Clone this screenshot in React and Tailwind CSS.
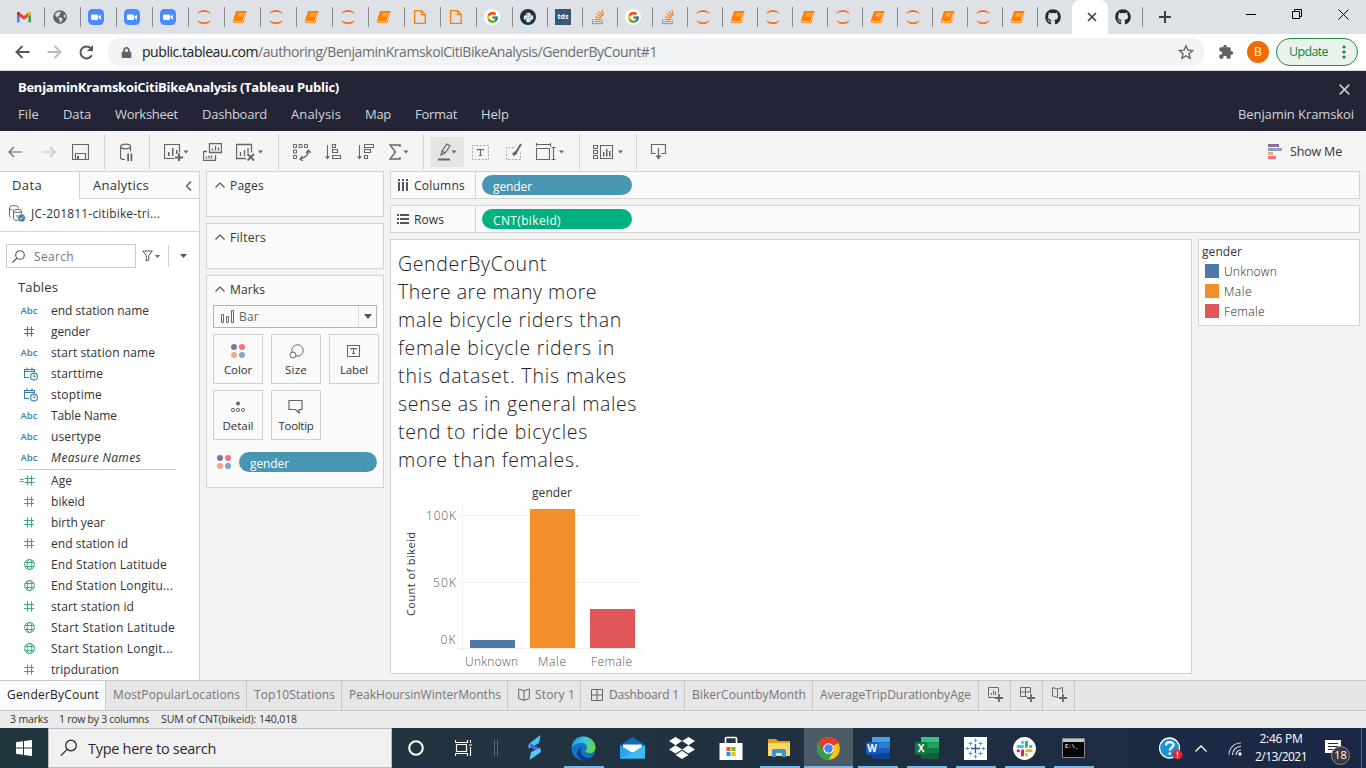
import React, { useLayoutEffect, useRef } from "react";
import { FaGithub, FaDropbox, FaPython, FaLock, FaGlobeAmericas } from "react-icons/fa";
import { FcGoogle } from "react-icons/fc";

/* Single-line label whose tracking is tuned so that the run has the given length. */
function Fit({ w, className = "", children }) {
  const ref = useRef(null);
  useLayoutEffect(() => {
    const el = ref.current;
    el.style.letterSpacing = "0px";
    const n = el.textContent.length;
    const natural = el.getBoundingClientRect().width;
    el.style.letterSpacing = (w - natural) / n + "px";
  }, [w, children]);
  return <span ref={ref} className={"inline-block whitespace-nowrap " + className}>{children}</span>;
}

const UI = "font-['Open_Sans','Noto_Sans',sans-serif]";

/* ---------- browser tabs ---------- */
const Gmail = () => (
  <svg width="16" height="16" viewBox="0 0 16 16">
    <path d="M1 3.600h2.600v10H2a1 1 0 0 1-1-1z" fill="#4285f4" />
    <path d="M12.400 3.600H15v9a1 1 0 0 1-1 1h-1.600z" fill="#34a853" />
    <path d="M3.600 3.600L8 7l4.400-3.400v3.800L8 10.800 3.600 7.400z" fill="#ea4335" />
    <path d="M1 4.200c0-1.600 1.600-2 2.600-1v4.200L1 5.600z" fill="#c5221f" />
    <path d="M15 4.200c0-1.600-1.600-2-2.600-1v4.200L15 5.600z" fill="#fbbc04" />
  </svg>
);
const Globe = () => <span className="flex size-4 items-center justify-center"><FaGlobeAmericas size={14} color="#5f6368" /></span>;
const Zoom = () => (
  <svg width="16" height="16" viewBox="0 0 16 16">
    <rect width="16" height="16" rx="4.500" fill="#4a8cff" />
    <rect x="3" y="5.500" width="7" height="5.500" rx="1" fill="#fff" />
    <path d="M10.500 7.500L13 5.700v5.100l-2.500-1.800z" fill="#fff" />
  </svg>
);
const Jupyter = () => (
  <svg width="16" height="16" viewBox="0 0 16 16" fill="#f37626">
    <path d="M1 5.200C2.500 2.200 5 1 8 1s5.500 1.200 7 4.200C13 3.500 10.500 3 8 3s-5 .5-7 2.200z" />
    <path d="M1 11c1.500 3 4 4.200 7 4.200s5.500-1.200 7-4.200c-2 1.700-4.500 2.200-7 2.200S3 12.700 1 11z" />
  </svg>
);
const Book = () => (
  <svg width="16" height="16" viewBox="0 0 16 16">
    <path d="M5.400 2h7.800c1 0 1.500.7 1.200 1.600L12 12.400c-.3 1-1 1.600-2 1.600H2.800c-1.500 0-2.300-1.300-1.800-2.600L3.600 3.400C3.900 2.500 4.500 2 5.400 2z" fill="#ff7f00" />
    <path d="M6.400 4.800h5M5.800 6.800h5" stroke="#fde3c8" strokeWidth=".9" />
    <path d="M2.400 11.300c-.6 1.300 0 1.500.7 1.500h6.700c.8 0 1-.3 1.300-1.200L13.500 4" fill="none" stroke="#fde3c8" strokeWidth=".9" />
  </svg>
);
const File = () => (
  <svg width="16" height="16" viewBox="0 0 16 16" fill="none" stroke="#ff7f00" strokeWidth="1.300">
    <path d="M2.600 1.700h7l3.700 3.800v8.800H2.600z" /><path d="M9.500 1.700v4h4" />
  </svg>
);
const Google = () => <span className="flex size-4 items-center justify-center rounded-full bg-white"><FcGoogle size={13} /></span>;
const Python = () => <span className="flex size-4 items-center justify-center rounded-full bg-[#1c3247]"><FaPython size={11} color="#e3eaf2" /></span>;
const Tds = () => <span className={"flex size-4 items-center justify-center bg-[#355876] pb-px text-[7px] leading-none font-bold text-white " + UI}>tds</span>;
const Stack = () => (
  <svg width="16" height="16" viewBox="0 0 16 16" fill="none" strokeWidth="1.200">
    <path d="M2.600 10.200v4.500h9.600v-4.500" stroke="#9a9b9e" />
    <path d="M4.300 12.500h6.200M4.500 10.200l6.100.8M5.200 7.500l5.700 2.100M6.700 4.800l4.900 3.500M9 2.500l3.500 4.700M12 1l1.400 5.500" stroke="#f48024" />
  </svg>
);
const Github = () => <FaGithub size={16} color="#24292e" />;

const wideTabs = [Gmail, Globe, Zoom, Zoom, Zoom, Jupyter, Book, Jupyter, Book, Jupyter, Book, File, File, Google];
const narrowTabs = [Python, Tds, Stack, Google, Stack, Jupyter, Book, Jupyter, Book, Jupyter, Book, Jupyter, Book, Jupyter, Book, Github];

function TabStrip() {
  return (
    <div className="flex h-[34px] bg-[#dee1e6] pl-2">
      {wideTabs.map((Icon, i) => (
        <div key={i} className="flex w-9 items-center">
          <div className={"h-5 w-px " + (i ? "bg-[#86898d]" : "")} />
          <div className="ml-[7px]"><Icon /></div>
        </div>
      ))}
      {narrowTabs.map((Icon, i) => (
        <div key={i} className="flex w-[35px] items-center">
          <div className="h-5 w-px bg-[#86898d]" />
          <div className="ml-[7px]"><Icon /></div>
        </div>
      ))}
      <div className="flex w-9 items-center justify-center rounded-t-lg bg-white pl-1">
        <svg width="10" height="10" viewBox="0 0 10 10" stroke="#3c4043" strokeWidth="1.700"><path d="M1 1l8 8M9 1l-8 8" /></svg>
      </div>
      <div className="flex w-[34px] items-center pl-[7px]"><Github /></div>
      <div className="flex items-center">
        <div className="h-5 w-px bg-[#86898d]" />
        <svg className="ml-4" width="12" height="12" viewBox="0 0 12 12" stroke="#3c4043" strokeWidth="2"><path d="M6 0v12M0 6h12" /></svg>
      </div>
      <div className="ml-auto flex h-7 items-center pr-[17px]">
        <svg className="mr-9" width="10" height="10" viewBox="0 0 10 10"><path d="M0 5.500h10" stroke="#000" /></svg>
        <svg className="mr-9" width="10" height="10" viewBox="0 0 10 10" fill="none" stroke="#000"><path d="M.5 2.500h7v7h-7zM2.500 2.500v-2h7v7h-2" /></svg>
        <svg width="11" height="11" viewBox="0 0 11 11" stroke="#000"><path d="M.5.5l10 10M10.500.5l-10 10" /></svg>
      </div>
    </div>
  );
}

function AddressBar() {
  return (
    <div className={"flex h-[37px] items-center border-b border-[#d9dadc] bg-white " + UI}>
      <svg className="ml-[15px]" width="15" height="14" viewBox="0 0 15 14" fill="none" stroke="#54575b" strokeWidth="1.900"><path d="M14.500 7H1.500M7.500 1L1.500 7l6 6" /></svg>
      <svg className="ml-[17px]" width="15" height="14" viewBox="0 0 15 14" fill="none" stroke="#babcbe" strokeWidth="1.900"><path d="M.5 7h13M7.500 1l6 6-6 6" /></svg>
      <svg className="ml-[17px]" width="15" height="15" viewBox="0 0 15 15"><path d="M12.800 10.200A6 6 0 1 1 12 3.400" fill="none" stroke="#54575b" strokeWidth="2" /><path d="M14 0v6H8z" fill="#54575b" /></svg>
      <div className="ml-[14px] flex h-7 w-[1096px] items-center rounded-full bg-[#f1f3f4]">
        <FaLock className="ml-[13px]" size={11} color="#5f6368" />
        <div className="ml-[10px] flex text-[14px] leading-5">
          <Fit w={116} className="text-[#202124]">public.tableau.com</Fit>
          <Fit w={399} className="text-[#6b6e72]">/authoring/BenjaminKramskoiCitiBikeAnalysis/GenderByCount#1</Fit>
        </div>
        <svg className="mr-[10px] ml-auto" width="16" height="16" viewBox="0 0 24 24" fill="none" stroke="#5f6368" strokeWidth="2"><path d="M12 2.800l2.800 6.500 7 .6-5.300 4.600 1.600 6.900-6.100-3.700-6.100 3.700 1.600-6.900-5.300-4.600 7-.6z" /></svg>
      </div>
      <svg className="ml-[14px]" width="16" height="16" viewBox="0 0 24 24" fill="#5f6368"><path d="M20.500 11H19V7a2 2 0 0 0-2-2h-4V3.500a2.500 2.500 0 0 0-5 0V5H4a2 2 0 0 0-2 2v3.800h1.500a2.700 2.700 0 0 1 0 5.400H2V20a2 2 0 0 0 2 2h3.800v-1.500a2.700 2.700 0 0 1 5.400 0V22H17a2 2 0 0 0 2-2v-4h1.500a2.500 2.500 0 0 0 0-5z" /></svg>
      <div className="ml-[13px] flex size-[22px] items-center justify-center rounded-full bg-[#ef6c00] text-[12px] text-white">B</div>
      <div className="ml-[7px] flex h-7 w-[82px] items-center rounded-full border border-[#1e8e3e] bg-[#e9f2ec] text-[12.500px] text-[#188038]">
        <Fit w={39} className="ml-3">Update</Fit>
        <svg className="ml-[14px]" width="4" height="14" fill="#188038"><circle cx="2" cy="2" r="1.600" /><circle cx="2" cy="7" r="1.600" /><circle cx="2" cy="12" r="1.600" /></svg>
      </div>
    </div>
  );
}

/* ---------- Tableau header ---------- */
const menus = [["File", 21], ["Data", 28], ["Worksheet", 63], ["Dashboard", 65], ["Analysis", 50], ["Map", 26], ["Format", 42], ["Help", 28]];

function Header() {
  return (
    <div className="flex h-[60px] justify-between bg-[#232536] pr-3 pl-[18px]">
      <div>
        <div className="flex h-8 items-center pt-px text-[13px] font-bold text-white"><Fit w={321}>BenjaminKramskoiCitiBikeAnalysis (Tableau Public)</Fit></div>
        <div className="flex h-[22px] items-center gap-6 pt-0.5 text-[13px] text-[#d4d5da]">
          {menus.map(([m, w]) => <Fit key={m} w={w}>{m}</Fit>)}
        </div>
      </div>
      <div className="flex flex-col items-end">
        <div className="flex h-8 items-center pt-1 pr-1">
          <svg width="11" height="11" viewBox="0 0 11 11" stroke="#c8c8cc" strokeWidth="1.700"><path d="M.7.7l9.600 9.600M10.300.7L.7 10.300" /></svg>
        </div>
        <div className="flex h-[22px] items-center pt-0.5 text-[13px] text-[#d4d5da]"><Fit w={116}>Benjamin Kramskoi</Fit></div>
      </div>
    </div>
  );
}

const Sep = ({ className = "" }) => <div className={"h-9 w-px bg-[#d4d4d4] " + className} />;
const Ico = ({ w, h = 18, className = "", children }) => (
  <svg width={w} height={h} viewBox={`0 0 ${w} ${h}`} fill="none" stroke="#666" className={"shrink-0 " + className}>{children}</svg>
);
const Caret = ({ x, y = 7.5 }) => <path d={`M${x} ${y}h5l-2.500 3z`} fill="#666" stroke="none" />;

function Toolbar() {
  return (
    <div className="flex h-10 items-center bg-[#f5f5f5] pt-px">
      <Ico w={14} className="ml-2"><path d="M14 9H1M6 4L1 9l5 5" strokeWidth="1.200" /></Ico>
      <Ico w={14} className="ml-5"><path d="M0 9h13M8 4l5 5-5 5" stroke="#c2c2c2" strokeWidth="1.200" /></Ico>
      <Ico w={17} className="ml-4"><path d="M.5 1.500h16v15H.5zM3.500 16.500v-6h10v6" strokeWidth="1.200" /><path d="M5 13h2v3H5z" fill="#666" stroke="none" /></Ico>
      <Sep className="ml-[15px]" />
      <Ico w={14} className="ml-[15px]"><ellipse cx="5.500" cy="3.500" rx="5" ry="2.300" strokeWidth="1.200" /><path d="M.5 3.500v11c0 1 2 2 4.500 2M10.500 3.500v5" strokeWidth="1.200" /><path d="M7.200 10.500h1.800v7.500H7.200zM10.500 10.500h1.800v7.500h-1.800z" fill="#666" stroke="none" /></Ico>
      <Sep className="ml-[15px]" />
      <Ico w={26} className="ml-[14px]"><path d="M10.500 15.500H.5v-14h15v8" strokeWidth="1.200" /><path d="M4 9h1.500v4H4zM8 5h1.500v8H8zM12 7h1.500v4H12z" fill="#666" stroke="none" /><path d="M15 10.500v8M11 14.500h8" strokeWidth="2" /><Caret x={19.500} /></Ico>
      <Ico w={19} className="ml-[13px]"><path d="M6.500.5h12v9h-12zM4 8.500H.5v9h12V12M9.500 7.500v-2M12.500 7.500V3M15.500 7.500v-3M3.500 15.500v-2M6 15.500v-3M8.500 15.500v-3" strokeWidth="1.300" /></Ico>
      <Ico w={28} className="ml-[14px]"><path d="M10 15.500H.5v-14h15v8M4.500 13V9M8.500 13V7M12 10V5" strokeWidth="1.300" /><path d="M11.500 11l6.500 6.500M18 11l-6.500 6.500" strokeWidth="1.900" /><Caret x={22} /></Ico>
      <Sep className="ml-[14px]" />
      <Ico w={18} className="ml-[14px]"><path d="M.5 1.500h3v3h-3zM6 1.500h3v3H6zM11.500 1.500h3v3h-3zM.5 7h3v3h-3zM.5 12.500h3v3h-3z" /><path d="M15.500 7.500c0 4-3 7-8 8.500M13 10l2.500-3L18 10M9.500 13L7 16l3 2" strokeWidth="1.300" /></Ico>
      <Ico w={17} className="ml-[14px]"><path d="M2.500 2v13M.5 13l2 2.500 2-2.500M7.500 1.500h3v3h-3zM7.500 6.500h5v3h-5zM7.500 12.500h8v3h-8z" strokeWidth="1.100" /></Ico>
      <Ico w={17} className="ml-[15px]"><path d="M2.500 2v13M.5 13l2 2.500 2-2.500M7.500 1.500h9v3h-9zM7.500 6.500h6v3h-6zM7.500 12.500h3v3h-3z" strokeWidth="1.100" /></Ico>
      <Ico w={20} className="ml-[15px]"><path d="M11 4V2H1l5.500 7L1 16h10v-2" strokeWidth="1.400" /><Caret x={14.500} /></Ico>
      <Sep className="ml-[14px]" />
      <div className="ml-[7px] flex h-[30px] w-[33px] items-center bg-[#e5e5e5] pl-1.5">
        <Ico w={22}><path d="M4 12l1-4 5-7 3 2-5 7zM4 12l4-2M5 8l3 2" strokeWidth="1.200" /><path d="M1 16.500h12" strokeWidth="2" /><Caret x={14.500} /></Ico>
      </div>
      <Ico w={17} className="ml-2"><rect x=".5" y="2.500" width="16" height="14" strokeDasharray="2 1.500" stroke="#aaa" /><path d="M5.500 7.500V6.500h6v1M8.500 6.500v6M7 12.500h3" strokeWidth="1.200" /></Ico>
      <Ico w={17} className="ml-[17px]"><path d="M8 4.500H.5v12h14V8" strokeDasharray="2 1.500" stroke="#aaa" /><path d="M15 1l-5 8.500" strokeWidth="2" /><path d="M10.500 9L7 12" strokeWidth="3" /></Ico>
      <Ico w={29} className="ml-[13px]"><path d="M.5 5.500h13v11H.5zM.5 0v3.500M14.500 0v3.500M.5 1.500h14M15.500 4.500h4M15.500 16.500h4M17.500 4.500v12" strokeWidth="1.100" /><Caret x={23} /></Ico>
      <Sep className="ml-[14px]" />
      <Ico w={31} className="ml-[13px]"><path d="M.5 2.500h4v3h-4zM.5 7.500h4v3h-4zM.5 12.500h4v3h-4zM7.500 2.500h12v13h-12z" strokeWidth="1.100" /><path d="M10 9h1.500v4.500H10zM13 6h1.500v7.500H13zM16 8h1.500v5.500H16z" fill="#666" stroke="none" /><Caret x={25} /></Ico>
      <Sep className="ml-[12px]" />
      <Ico w={17} className="ml-[13px]"><path d="M5.500 10.500h-4v-9h14v9h-4M8.500 5v8" strokeWidth="1.200" /><path d="M5.500 12.500h6l-3 4z" fill="#666" stroke="none" /></Ico>
      <svg className="ml-auto" width="15" height="15" viewBox="0 0 15 15"><path d="M1 0h11v3H1z" fill="#8b6f98" /><path d="M1 4h14v3H1z" fill="#7fa4cd" /><path d="M1 8h5v3H1z" fill="#f4a77c" /><path d="M1 12h8v3H1z" fill="#f97083" /></svg>
      <Fit w={52} className="mt-0.5 mr-6 ml-2 text-[12.500px] text-[#333]">Show Me</Fit>
    </div>
  );
}

/* ---------- data pane ---------- */
const Abc = () => <Fit w={17} className="text-[9.500px] font-semibold text-[#3b82a0]">Abc</Fit>;
const Hash = ({ color = "#3b82a0" }) => (
  <svg width="11" height="11" viewBox="0 0 11 11" stroke={color} strokeWidth="1.200"><path d="M0 3.500h10M0 7.500h10M3.500.5v10M7.500.5v10" /></svg>
);
const CalcHash = () => (
  <svg className="-ml-1" width="15" height="11" viewBox="0 0 15 11" stroke="#41a88a" strokeWidth="1.200"><path d="M4.500 3.500h10M4.500 7.500h10M7.500.5v10M11.500.5v10M0 4.500h3.500M0 6.500h3.500" /></svg>
);
const Cal = () => (
  <svg className="ml-1" width="15" height="14" viewBox="0 0 15 14" fill="none" stroke="#3b82a0" strokeWidth="1.100"><path d="M5 10.500H.5v-8h10V5M.5 4.500h10M3 .5v3M8 .5v3" /><circle cx="10" cy="9.500" r="3.400" fill="#fff" /><path d="M10 7.500v2h1.500" /></svg>
);
const Geo = () => (
  <svg width="11" height="11" viewBox="0 0 11 11" fill="none" stroke="#41a88a" strokeWidth="1"><circle cx="5.500" cy="5.500" r="5" /><ellipse cx="5.500" cy="5.500" rx="2.300" ry="5" /><path d="M1 3.500h9M1 7.500h9" /></svg>
);
const GHash = () => <Hash color="#41a88a" />;
const dims = [[Abc, "end station name", 98], [Hash, "gender", 39], [Abc, "start station name", 104], [Cal, "starttime", 52], [Cal, "stoptime", 51], [Abc, "Table Name", 66], [Abc, "usertype", 50], [Abc, "Measure Names", 90]];
const measures = [[CalcHash, "Age", 21], [GHash, "bikeid", 34], [GHash, "birth year", 54], [GHash, "end station id", 77], [Geo, "End Station Latitude", 116], [Geo, "End Station Longitu...", 122], [GHash, "start station id", 83], [Geo, "Start Station Latitude", 124], [Geo, "Start Station Longit...", 122], [GHash, "tripduration", 68]];

const Field = ({ row: [Icon, name, w] }) => (
  <div className="flex h-[21px] items-center text-[12px] leading-[17px] text-[#333]">
    <div className="flex w-[51px] justify-center pr-px pl-[8px]"><Icon /></div>
    <Fit w={w} className={name === "Measure Names" ? "italic" : ""}>{name}</Fit>
  </div>
);

function DataPane() {
  return (
    <div className="flex w-[200px] shrink-0 flex-col border-t border-r border-[#d4d4d4] bg-white">
      <div className="flex h-[27px] text-[13px] text-[#333]">
        <div className="flex w-[79px] items-center pl-3"><Fit w={30}>Data</Fit></div>
        <div className="flex flex-1 items-center border-b border-l border-[#d4d4d4] bg-[#fafafa] pl-[13px]">
          <Fit w={56} className="mt-0.5">Analytics</Fit>
          <svg className="mt-px ml-auto mr-[7px]" width="7" height="10" viewBox="0 0 7 10" fill="none" stroke="#555" strokeWidth="1.300"><path d="M6 .5L1.500 5 6 9.500" /></svg>
        </div>
      </div>
      <div className="flex h-[33px] items-center border-b border-[#d4d4d4] pb-1 pl-[9px] text-[12px] text-[#333]">
        <svg width="17" height="17" viewBox="0 0 17 17" fill="none" stroke="#666"><path d="M2 12.500c-1-.5-1.500-1-1.500-2v-8c0-2.500 9-2.500 9 0v1M.5 3c0 1.500 1.500 1.700 3 1.800" /><path d="M4.500 6v7.500c0 1 2 2 4 2M4.500 6c0-2 8-2 8 0s-8 2-8 0M12.500 6v3M7 11h3" /><circle cx="12.500" cy="13" r="4" fill="#3b82a0" stroke="#fff" strokeWidth=".6" /><path d="M10.700 13l1.300 1.300 2.200-2.500" stroke="#fff" /></svg>
        <Fit w={129} className="mt-0.5 ml-[5px]">JC-201811-citibike-tri...</Fit>
      </div>
      <div className="mt-3 flex h-6 items-center">
        <div className="ml-1.5 flex h-6 w-[130px] items-center border border-[#ccc] pl-[5px] text-[12px] text-[#767676]">
          <svg width="13" height="13" viewBox="0 0 13 13" fill="none" stroke="#555" strokeWidth="1.100"><circle cx="8" cy="5" r="4.300" /><path d="M5 8L.5 12.500" /></svg>
          <Fit w={40} className="mt-px ml-[9px]">Search</Fit>
        </div>
        <svg className="ml-1.5" width="18" height="12" viewBox="0 0 18 12" fill="none" stroke="#555"><path d="M.8 1h9.500l-3.500 4.500v4.500l-2.500 1V5.500z" /><path d="M13 5h5l-2.500 3z" fill="#666" stroke="none" /></svg>
        <div className="ml-2 h-[22px] w-px bg-[#d4d4d4]" />
        <svg className="ml-[11px]" width="7" height="4"><path d="M0 0h7L3.500 4z" fill="#555" /></svg>
      </div>
      <div className="mt-[9px] h-[24px] pt-px pl-[18px] text-[13px] leading-[18px] text-[#333]"><Fit w={40}>Tables</Fit></div>
      <div className="-mt-px">{dims.map((r) => <Field key={r[1]} row={r} />)}</div>
      <div className="mt-px ml-[18px] h-px w-[158px] bg-[#ccc]" />
      <div className="h-[209px] overflow-hidden">{measures.map((r) => <Field key={r[1]} row={r} />)}</div>
    </div>
  );
}

/* ---------- cards ---------- */
const CardTitle = ({ w, children }) => (
  <div className="flex h-[26px] items-center pl-2 text-[12px] leading-[18px] text-[#333]">
    <svg width="10" height="6" viewBox="0 0 10 6" fill="none" stroke="#555" strokeWidth="1.200"><path d="M.5 5.500L5 1l4.500 4.500" /></svg>
    <Fit w={w} className="mt-px ml-[5px]">{children}</Fit>
  </div>
);
const Dots = () => (
  <svg width="14" height="14" viewBox="0 0 14 14"><circle cx="3" cy="3" r="3" fill="#8b6f98" /><circle cx="11" cy="3" r="3" fill="#f97083" /><circle cx="3" cy="11" r="3" fill="#f4a77c" /><circle cx="11" cy="11" r="3" fill="#7fa4cd" /></svg>
);
const MarkBtn = ({ label, w, children }) => (
  <div className="flex size-[50px] flex-col items-center border border-[#d0d0d0] bg-[#fafafa] pt-2 text-[11.500px] text-[#333]">
    <div className="flex h-4 items-center justify-center">{children}</div>
    <Fit w={w} className="mt-[3px] leading-4">{label}</Fit>
  </div>
);

function Cards() {
  return (
    <div className="ml-1.5 flex w-[178px] shrink-0 flex-col gap-1.5">
      <div className="h-[46px] border border-[#d4d4d4] bg-[#fafafa]"><CardTitle w={34}>Pages</CardTitle></div>
      <div className="h-[46px] border border-[#d4d4d4] bg-[#fafafa]"><CardTitle w={36}>Filters</CardTitle></div>
      <div className="h-[213px] border border-[#d4d4d4] bg-[#fafafa]">
        <CardTitle w={35}>Marks</CardTitle>
        <div className="mt-[3px] ml-1.5 flex h-[23px] w-[164px] items-center border border-[#b4b4b4] pl-[7px] text-[12px] text-[#666]">
          <svg width="13" height="13" viewBox="0 0 13 13" fill="none" stroke="#666"><path d="M.5 4.500h2v8h-2zM5.500 6.500h2v6h-2zM10.500 .5h2v12h-2z" /></svg>
          <Fit w={20} className="mt-px ml-[5px]">Bar</Fit>
          <div className="ml-auto flex h-full w-[18px] items-center justify-center border-l border-[#ddd]"><svg width="8" height="5"><path d="M0 0h8L4 5z" fill="#555" /></svg></div>
        </div>
        <div className="mt-1.5 ml-1.5 grid w-[166px] grid-cols-3 gap-x-2 gap-y-1.5">
          <MarkBtn label="Color" w={28}><Dots /></MarkBtn>
          <MarkBtn label="Size" w={22}><Ico w={15} h={15}><circle cx="8.500" cy="6.500" r="5.700" /><circle cx="4" cy="11" r="3" fill="#fafafa" /></Ico></MarkBtn>
          <MarkBtn label="Label" w={28}><Ico w={14} h={12}><path d="M.5.500h12v11H.5zM4 5V3.500h5V5M6.500 3.500v5M5 8.500h3" strokeWidth="1.100" /></Ico></MarkBtn>
          <MarkBtn label="Detail" w={31}><Ico w={14} h={12}><circle cx="7" cy="2.500" r="2" fill="#666" stroke="none" /><circle cx="2" cy="9" r="1.600" /><circle cx="7" cy="9" r="1.600" /><circle cx="12" cy="9" r="1.600" /></Ico></MarkBtn>
          <MarkBtn label="Tooltip" w={35}><Ico w={16} h={14}><path d="M1 .500h13v9h-3v3.500L7.500 9.500H1z" strokeWidth="1.200" /></Ico></MarkBtn>
        </div>
        <div className="mt-3 ml-[10px] flex items-center">
          <Dots />
          <div className="ml-2 flex h-5 w-[138px] items-center rounded-full bg-[#4996b2] pt-[3px] pl-[11px] text-[12px] leading-[17px] text-white"><Fit w={39}>gender</Fit></div>
        </div>
      </div>
    </div>
  );
}

const Shelf = ({ icon, label, w, pill, pw, color }) => (
  <div className="flex h-7 items-center border border-[#d4d4d4] bg-[#fafafa] text-[12px]">
    <div className="flex h-full w-[85px] items-center border-r border-[#d4d4d4] pl-1.5 text-[#333]">
      {icon}<Fit w={w} className="mt-px ml-[5px]">{label}</Fit>
    </div>
    <div className={"ml-1.5 flex h-5 w-[150px] items-center rounded-full pt-[3px] pl-[11px] leading-[17px] text-white " + color}><Fit w={pw}>{pill}</Fit></div>
  </div>
);

const title = [["GenderByCount", 149], ["There are many more", 199], ["male bicycle riders than", 224], ["female bicycle riders in", 217], ["this dataset. This makes", 229], ["sense as in general males", 239], ["tend to ride bicycles", 190], ["more than females.", 182]];

const bars = [
  { x: 79, y: 160, h: 8, fill: "#4e79a7" },
  { x: 139, y: 29, h: 139, fill: "#f28e2b" },
  { x: 199, y: 129, h: 39, fill: "#e15759" },
];

function Chart() {
  return (
    <svg width="260" height="192" viewBox="0 0 260 192" className="font-['Open_Sans',sans-serif]" fontSize="12">
      <path d="M67 35.500h184M67 102.500h184M66 168.500h185M71.500 22v150M131.500 168v4M191.500 168v4" stroke="#efefef" fill="none" />
      {bars.map((b) => <rect key={b.x} x={b.x} y={b.y} width="45" height={b.h} fill={b.fill} />)}
      <text x="141" y="17" textLength="40" fill="#333">gender</text>
      <g fill="#555" fontWeight="300">
        <text x="35" y="40" textLength="30">100K</text>
        <text x="42" y="107" textLength="23">50K</text>
        <text x="49.500" y="164" textLength="15">0K</text>
        <text x="74" y="186" textLength="53">Unknown</text>
        <text x="147" y="186" textLength="28">Male</text>
        <text x="200" y="186" textLength="41">Female</text>
      </g>
      <text transform="translate(24 136) rotate(-90)" fontSize="11" textLength="84" fill="#333">Count of bikeid</text>
    </svg>
  );
}

const legend = [["Unknown", 53, "bg-[#4e79a7]"], ["Male", 28, "bg-[#f28e2b]"], ["Female", 41, "bg-[#e15759]"]];

function Work() {
  return (
    <div className="ml-1.5 flex flex-1 flex-col gap-1.5 pr-1.5">
      <Shelf label="Columns" w={51} pill="gender" pw={39} color="bg-[#4996b2]"
        icon={<svg width="12" height="12" viewBox="0 0 12 12" fill="#555"><path d="M1 0h2v2H1zM1 3h2v9H1zM5 0h2v2H5zM5 3h2v9H5zM9 0h2v2H9zM9 3h2v9H9z" /></svg>} />
      <Shelf label="Rows" w={30} pill="CNT(bikeid)" pw={68} color="bg-[#00b180]"
        icon={<svg width="12" height="12" viewBox="0 0 12 12" fill="#555"><path d="M0 1h2v2H0zM3 1h9v2H3zM0 5h2v2H0zM3 5h9v2H3zM0 9h2v2H0zM3 9h9v2H3z" /></svg>} />
      <div className="flex items-start gap-1.5">
        <div className="flex h-[435px] w-[802px] flex-col border border-[#d4d4d4] bg-white">
          <div className="pt-[10px] pl-[7px] text-[19.500px] leading-7 font-light text-[#222]">
            {title.map(([t, w]) => <div key={t} className="h-7"><Fit w={w}>{t}</Fit></div>)}
          </div>
          <div className="mt-[6px]"><Chart /></div>
        </div>
        <div className="h-[87px] flex-1 border border-[#d4d4d4] bg-white pt-[3px] pl-[3px] text-[12px] leading-[18px] text-[#333]">
          <Fit w={40}>gender</Fit>
          {legend.map(([t, w, c]) => (
            <div key={t} className="flex h-5 items-center pl-[3px] font-light text-[#222]">
              <div className={"size-[14px] " + c} /><Fit w={w} className="mt-0.5 ml-[5px]">{t}</Fit>
            </div>
          ))}
        </div>
      </div>
    </div>
  );
}

/* ---------- sheet tabs ---------- */
const BookIco = () => <Ico w={12} h={13} className="mr-[5px]"><path d="M6 2.500v10M.7 1l5.300 1.800L11.300 1v9.500L6 12.300.7 10.500z" /></Ico>;
const GridIco = () => <Ico w={12} h={12} className="mr-1.5"><path d="M.5.500h11v11H.5zM6 .5v11M.5 6h11" /></Ico>;
const SheetTab = ({ w, width, children }) => (
  <div className={"flex items-center border-r border-[#c8c8c8] pl-[7px] " + width}><Fit w={w} className="-mt-0.5">{children}</Fit></div>
);

function SheetTabs() {
  return (
    <div className="flex h-[31px] border-t border-b border-[#c8c8c8] bg-[#e6e6e6] text-[12px] text-[#757575]">
      <div className="flex w-[106px] items-center border-r border-[#c8c8c8] bg-[#fcfcfc] pl-[7px] text-[#222]"><Fit w={92} className="-mt-0.5 font-medium">GenderByCount</Fit></div>
      <div className="flex">
        <SheetTab w={127} width="w-[141px]">MostPopularLocations</SheetTab>
        <SheetTab w={81} width="w-[95px]">Top10Stations</SheetTab>
        <SheetTab w={152} width="w-[166px]">PeakHoursinWinterMonths</SheetTab>
        <div className="flex w-[73px] items-center border-r border-[#c8c8c8] pb-0.5 pl-[10px]"><BookIco /><Fit w={40}>Story 1</Fit></div>
        <div className="flex w-[104px] items-center border-r border-[#c8c8c8] pb-0.5 pl-[10px]"><GridIco /><Fit w={70}>Dashboard 1</Fit></div>
        <SheetTab w={114} width="w-[128px]">BikerCountbyMonth</SheetTab>
        <SheetTab w={151} width="w-[166px]">AverageTripDurationbyAge</SheetTab>
        <div className="flex w-8 items-center border-r border-[#c8c8c8] pb-0.5 pl-[9px]"><Ico w={15} h={15}><path d="M7 10.500H.5V.5h10V6M3.500 8V6M5.500 8V3.500M7.500 8V4.500" /><path d="M11 7v8M7 11h8" strokeWidth="1.800" /></Ico></div>
        <div className="flex w-8 items-center border-r border-[#c8c8c8] pb-0.5 pl-[9px]"><Ico w={15} h={15}><path d="M7 9.500H.5V.5h10V6M.5 5h10M5.500.5v9" /><path d="M11 7v8M7 11h8" strokeWidth="1.800" /></Ico></div>
        <div className="flex w-8 items-center border-r border-[#c8c8c8] pb-0.5 pl-[9px]"><Ico w={15} h={15}><path d="M5.500 2v8.500L.5 9V.5l5 1.500 5-1.500V6" /><path d="M11 7v8M7 11h8" strokeWidth="1.800" /></Ico></div>
      </div>
    </div>
  );
}

/* ---------- Windows taskbar ---------- */
const Streamlabs = () => (
  <svg width="16" height="26" viewBox="0 0 16 26">
    <path d="M13.500 0L12 8 2 13.500C.8 11 1.500 9 3 8z" fill="#4fc4f7" />
    <path d="M3 8l10 5.500c1.500 1.500 1 3.500 0 4.500L2.500 12z" fill="#3b6fe8" />
    <path d="M2.500 25L4 17l9-4c1.500 2 .8 4.500-1 5.500z" fill="#57c8f9" />
  </svg>
);
const Edge = () => (
  <svg width="25" height="25" viewBox="0 0 25 25"><defs><linearGradient id="eg" x1="0" y1="0" x2="1" y2=".4"><stop offset="0" stopColor="#1b8ad8" /><stop offset=".5" stopColor="#35c1e8" /><stop offset="1" stopColor="#62d84b" /></linearGradient></defs>
    <circle cx="12.500" cy="12.500" r="12" fill="#1273c9" /><path d="M.6 12C1 5 6 .5 12.500.5 19.500.5 24.500 6 24.500 11c0 4-3 6-6 6s-4-1-4-2 1.500-1.500 1.500-4c0-2-2-4-5-4-5 0-9 2-10.400 5z" fill="url(#eg)" /><path d="M9.500 14c0 5 4 8 8.500 8 2 0 3.500-.5 4.500-1.200C20 23.500 16 25 12.500 24.500 8 23.500 5 19 6.500 15c1-3 3-4 4.500-4-1 .8-1.500 1.800-1.500 3z" fill="#0c3f87" /></svg>
);
const Mail = () => <svg width="25" height="22" viewBox="0 0 25 22"><path d="M0 8L12.500 0 25 8v13.500H0z" fill="#0f6cbd" /><path d="M3 7.500h19v8H3z" fill="#f4f8fc" /><path d="M0 8l12.500 8L25 8v13.500H0z" fill="#2ba5ee" /><path d="M0 21.500L14 15l11-7v13.500z" fill="#45c3f8" opacity=".7" /></svg>;
const Store = () => <svg width="24" height="25" viewBox="0 0 24 25"><path d="M6.500 7V2.500a1 1 0 0 1 1-1h9a1 1 0 0 1 1 1V7" fill="none" stroke="#fff" strokeWidth="1.700" /><path d="M.5 7h23v17H.5z" fill="#fff" /><path d="M7.500 11h4v4h-4z" fill="#f25022" /><path d="M12.500 11h4v4h-4z" fill="#7fba00" /><path d="M7.500 16h4v4h-4z" fill="#00a4ef" /><path d="M12.500 16h4v4h-4z" fill="#ffb900" /></svg>;
const Explorer = () => <svg width="23" height="20" viewBox="0 0 23 20"><path d="M0 1h8l2 2h12v15H0z" fill="#e3a21a" /><path d="M0 5h22v13H0z" fill="#ffd869" /><path d="M4 19v-6a2 2 0 0 1 2-2h10a2 2 0 0 1 2 2v6h-4v-4H8v4z" fill="#3b92dd" /></svg>;
const Chrome = () => <svg width="23" height="23" viewBox="0 0 23 23"><circle cx="11.500" cy="11.500" r="11.300" fill="#fbc116" /><path d="M11.500 11.500L1.700 5.800A11.300 11.300 0 0 1 21.300 5.800z" fill="#e33b2e" /><path d="M1.700 5.800A11.300 11.300 0 0 0 11.500 22.800l5-8.600-5-2.700z" fill="#2f9e4f" /><path d="M11.500 6h9.900a11.300 11.300 0 0 0-19.700-.2l5 8.400z" fill="#e33b2e" /><circle cx="11.500" cy="11.500" r="5.300" fill="#fff" /><circle cx="11.500" cy="11.500" r="4.200" fill="#4285f4" /></svg>;
const Office = ({ letter, c }) => (
  <svg width="24" height="22" viewBox="0 0 24 22"><path d="M6 0h18v5.500H6z" fill={c[0]} /><path d="M6 5.500h18V11H6z" fill={c[1]} /><path d="M6 11h18v5.500H6z" fill={c[2]} /><path d="M6 16.500h18V22H6z" fill={c[3]} /><rect y="5" width="12.500" height="12.500" rx="1" fill={c[2]} /><text x="6.200" y="15" textAnchor="middle" fontSize="10" fontWeight="700" fill="#fff" fontFamily="Open Sans">{letter}</text></svg>
);
const TableauIco = () => (
  <svg width="23" height="23" viewBox="0 0 23 23"><path d="M0 0h23v23H0z" fill="#fff" /><path d="M11.500 7v9M7 11.500h9" stroke="#1f5d94" strokeWidth="1.300" /><path d="M11.500 1.500v4M10 3.500h3M11.500 17.500v4M10 19.500h3M1.500 11.500h4M3.500 10v3M17.500 11.500h4M19.500 10v3M6.500 4.500v4M4.500 6.500h4M16.500 4.500v4M14.500 6.500h4M6.500 14.500v4M4.500 16.500h4M16.500 14.500v4M14.500 16.500h4" stroke="#5b9ac0" /></svg>
);
const Slack = () => (
  <svg width="23" height="23" viewBox="0 0 23 23" strokeLinecap="round" strokeWidth="3"><circle cx="11.500" cy="11.500" r="11.400" fill="#fff" /><path d="M5 9.500h4.500M9.500 5.200v.4" stroke="#36c5f0" /><path d="M13.500 5v4.500M17.600 9.500h.3" stroke="#2eb67d" /><path d="M18 13.700h-4.500M13.500 17.600v.3" stroke="#ecb22e" /><path d="M9.500 18v-4.300M5.400 13.700h-.3" stroke="#e01e5a" /></svg>
);
const Cmd = () => <svg width="23" height="20" viewBox="0 0 23 20"><path d="M.5.500h22v19H.5z" fill="#050505" stroke="#888" /><path d="M1 1h21v3H1z" fill="#c8c8c8" /><text x="3" y="10" fontSize="5.500" fontWeight="700" fill="#fff" fontFamily="Liberation Mono">C:\_</text></svg>;

const apps = [
  [Streamlabs, ""], [Edge, "bg-[#76b9ed]"], [Mail, ""], [() => <FaDropbox size={26} color="#fff" />, ""], [Store, ""], [Explorer, "bg-[#76b9ed]"],
  [Chrome, "chrome"],
  [() => <Office letter="W" c={["#41a5ee", "#2b7cd3", "#185abd", "#103f91"]} />, "bg-[#76b9ed]"],
  [() => <Office letter="X" c={["#33c481", "#21a366", "#107c41", "#185c37"]} />, "bg-[#76b9ed]"],
  [TableauIco, "bg-[#76b9ed]"], [Slack, "bg-[#76b9ed]"], [Cmd, "bg-[#76b9ed]"],
];

function Taskbar() {
  return (
    <div className={"flex h-10 bg-linear-to-r from-[#22363f] via-[#20323f] via-55% to-[#1a2747] " + UI}>
      <div className="flex w-12 items-center justify-center">
        <svg width="16" height="16" viewBox="0 0 16 16" fill="#fff"><path d="M0 2.200l7-1v6.300H0zM8 1l8-1v7.500H8zM0 8.500h7v6.300l-7-1zM8 8.500h8V16l-8-1z" /></svg>
      </div>
      <div className="flex w-[344px] items-center border border-[#bcbcbc] bg-[#f1f1f1] pl-[11px] text-[14.500px] text-[#2b2b2b]">
        <svg width="18" height="18" viewBox="0 0 18 18" fill="none" stroke="#222" strokeWidth="1.200"><circle cx="11" cy="6.500" r="5.300" /><path d="M7.200 10.300L.8 16.700" /></svg>
        <Fit w={128} className="mt-0.5 ml-[10px]">Type here to search</Fit>
      </div>
      <div className="flex flex-1 items-center">
        <svg className="ml-4" width="16" height="16"><circle cx="8" cy="8" r="6.800" fill="none" stroke="#fff" strokeWidth="2" /></svg>
        <svg className="ml-[31px]" width="18" height="16" viewBox="0 0 18 16" fill="none" stroke="#fff"><path d="M1.500 4.500h10v7h-10zM.5 0v2.500h12V0M.5 16v-2.500h12V16M15.500 0v3M15.500 7v9M14 5h3" strokeWidth="1.200" /></svg>
        <div className="ml-[21px] flex h-4 w-1 justify-between"><div className="w-px bg-[#5d6c73]" /><div className="w-px bg-[#5d6c73]" /></div>
        <div className="ml-3 flex h-full">
          {apps.map(([Icon, u], i) => (
            <div key={i} className={"flex h-full w-[49px] flex-col items-center " + (u === "chrome" ? "bg-[#4c5b65]" : "")}>
              <div className="flex flex-1 items-center pt-0.5"><Icon /></div>
              <div className={"h-0.5 " + (u === "chrome" ? "w-[49px] bg-[#76b9ed]" : "w-10 " + u)} />
            </div>
          ))}
        </div>
        <svg className="ml-auto" width="24" height="23" viewBox="0 0 24 23"><circle cx="10.500" cy="11" r="10" fill="#1b95d1" stroke="#fff" strokeWidth="1.300" /><path d="M7 8.500c0-4.500 7.500-4.500 7.500-.5 0 2.500-3.700 2.700-3.700 5.500M10.800 15.500v2.300" fill="none" stroke="#fff" strokeWidth="2.300" /><circle cx="18.500" cy="17.500" r="5" fill="#e8222d" /><path d="M18.500 14.500v3.700M18.500 19.300v1.300" stroke="#fff" strokeWidth="1.400" /></svg>
        <svg className="ml-3" width="12" height="7" viewBox="0 0 12 7" fill="none" stroke="#fff" strokeWidth="1.300"><path d="M.5 6.500L6 1l5.500 5.500" /></svg>
        <svg className="mt-0.5 ml-[21px]" width="14" height="14" viewBox="0 0 14 14" fill="none" stroke="#f0f2f5" strokeWidth="1.100"><path d="M1 13C1 6 6 1 13 1" opacity=".8" /><path d="M4.500 13c0-5 3.500-8.500 8.500-8.500M8 13c0-3 2-5 5-5" /><circle cx="12" cy="12" r="1.200" fill="#fff" /></svg>
        <div className="ml-[13px] flex w-[52px] flex-col items-center text-[12px] leading-[18px] text-white">
          <Fit w={43}>2:46 PM</Fit><Fit w={52}>2/13/2021</Fit>
        </div>
        <div className="relative mt-2 ml-[18px] h-6 w-[26px]">
          <svg width="16" height="17" viewBox="0 0 16 17"><path d="M0 0h16v13h-6v4l-4-4H0z" fill="#fff" /><path d="M3 3.500h10M3 6.500h10M3 9.500h5" stroke="#1c2a45" strokeWidth="1.100" /></svg>
          <div className="absolute top-[6px] left-[6px] flex size-[19px] items-center justify-center rounded-full border border-[#8a8a8a] bg-[#3a3a3a] text-[11px] text-white">18</div>
        </div>
        <div className="mr-1 ml-[10px] h-full w-px bg-[#5b6478]" />
      </div>
    </div>
  );
}

export default function App() {
  return (
    <div className={"flex h-[768px] w-[1366px] flex-col overflow-hidden bg-[#f3f3f3] " + UI}>
      <TabStrip />
      <AddressBar />
      <Header />
      <Toolbar />
      <div className="flex h-[509px]">
        <DataPane />
        <Cards />
        <Work />
      </div>
      <SheetTabs />
      <div className="flex h-[17px] items-start bg-[#ebebeb] pl-[10px] text-[10.500px] leading-4 text-[#333]">
        <Fit w={38}>3 marks</Fit><Fit w={90} className="ml-[11px]">1 row by 3 columns</Fit><Fit w={136} className="ml-3">SUM of CNT(bikeid): 140,018</Fit>
      </div>
      <Taskbar />
    </div>
  );
}
